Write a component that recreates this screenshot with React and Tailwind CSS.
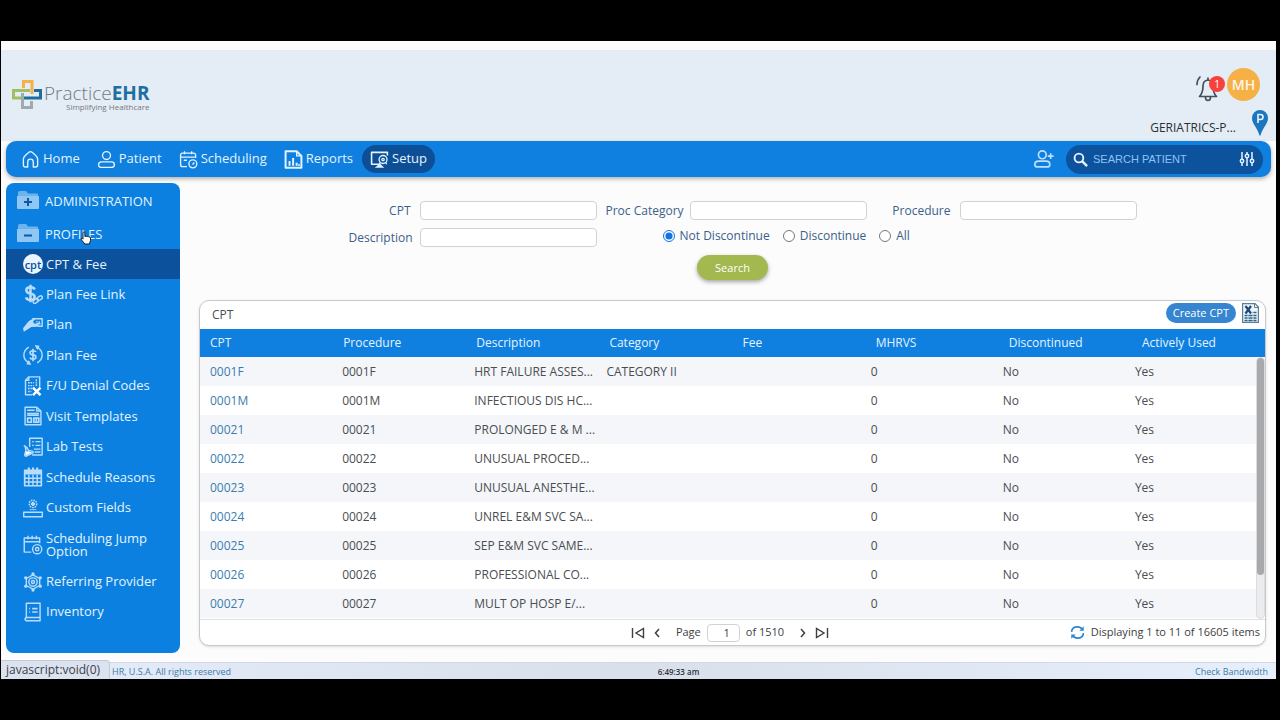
import React from 'react';

const navItems = [
  { label: 'Home', icon: 'home' },
  { label: 'Patient', icon: 'patient' },
  { label: 'Scheduling', icon: 'scheduling' },
  { label: 'Reports', icon: 'reports' },
  { label: 'Setup', icon: 'setup', active: true },
];

const sideItems = [
  { label: 'CPT & Fee', icon: 'cpt', active: true },
  { label: 'Plan Fee Link', icon: 'feeLink' },
  { label: 'Plan', icon: 'plan' },
  { label: 'Plan Fee', icon: 'planFee' },
  { label: 'F/U Denial Codes', icon: 'denial' },
  { label: 'Visit Templates', icon: 'templates' },
  { label: 'Lab Tests', icon: 'lab' },
  { label: 'Schedule Reasons', icon: 'calendar' },
  { label: 'Custom Fields', icon: 'fields' },
  { label: 'Scheduling Jump Option', icon: 'jump', tall: true },
  { label: 'Referring Provider', icon: 'provider' },
  { label: 'Inventory', icon: 'inventory' },
];

const columns = ['CPT', 'Procedure', 'Description', 'Category', 'Fee', 'MHRVS', 'Discontinued', 'Actively Used'];

const rows = [
  ['0001F', 'HRT FAILURE ASSES...', 'CATEGORY II'],
  ['0001M', 'INFECTIOUS DIS HC...', ''],
  ['00021', 'PROLONGED E & M ...', ''],
  ['00022', 'UNUSUAL PROCED...', ''],
  ['00023', 'UNUSUAL ANESTHE...', ''],
  ['00024', 'UNREL E&M SVC SA...', ''],
  ['00025', 'SEP E&M SVC SAME...', ''],
  ['00026', 'PROFESSIONAL CO...', ''],
  ['00027', 'MULT OP HOSP E/...', ''],
];

const glyphs = {
  home: <path d="M3 11.5C3 9 4 8 6 6.200L10 2.800q2-1.500 4 0L18 6.200C20 8 21 9 21 11.500V19q0 2.500-2.500 2.500H15.500V15q0-3.500-3.500-3.500T8.500 15v6.500H5.500Q3 21.500 3 19Z" />,
  patient: (
    <>
      <circle cx="12" cy="7" r="5" />
      <path d="M6 15h12q4 0 4 3.500T18 22H6q-4 0-4-3.500T6 15Z" />
    </>
  ),
  scheduling: (
    <>
      <path d="M21 10V6.500Q21 4 18.500 4H4.500Q2 4 2 6.500v12Q2 21 4.500 21H10M2 9h19M7 1.500v4M16 1.500v4M6 13h4" />
      <circle cx="17.5" cy="17.500" r="5" />
      <path d="m17 18.200 2.500-2.500" />
    </>
  ),
  reports: (
    <>
      <path d="M2 1.500h14l6 6v15H2Z" strokeWidth="2.500" />
      <path d="M16 1.500v6h6" />
      <path d="M7 20v-6M11.500 20V10M16 20v-4M19 20v-2" strokeWidth="2.500" />
    </>
  ),
  setup: (
    <>
      <path d="M12 18H2V3h20v4" strokeWidth="2" />
      <path d="M6 22.500h12L12.500 17Z" fill="currentColor" stroke="none" />
      <circle cx="16.500" cy="12" r="5" />
      <circle cx="16.500" cy="12" r="1.500" />
      <path d="m13 16-2 3M20 16l1 2" />
    </>
  ),
  feeLink: (
    <>
      <path d="M14 6.500Q13 4 9 4 4 4 4 7.500q0 3 5 4t5 4Q14 19 9 19q-4.500 0-5.500-3M9 1v21" strokeWidth="3" />
      <rect x="11.500" y="18.500" width="7" height="4" rx="2" transform="rotate(-35 15 20)" />
      <rect x="16.500" y="15" width="7" height="4" rx="2" transform="rotate(-35 20 17)" />
    </>
  ),
  plan: (
    <>
      <path d="M0 16 6 8.500q4-4 9-4l-3 3.500 1 2 6 1.500q1 2-2 2.500l-7 .5L1 20Z" fill="currentColor" stroke="none" />
      <path d="M11 4.500h12v9h-5" />
      <path d="M16 8h1.500M19.500 7.500v3M16 10.500h5" />
    </>
  ),
  planFee: (
    <>
      <path d="M7 2.500Q1 6 1 12t6 9.500M17 21.500q6-3.500 6-9.500T17 2.500" />
      <path d="M14 0l6 1-3 5ZM10 24l-6-1 3-5Z" fill="currentColor" stroke="none" />
      <path d="M15.500 8.500Q15 7 12 7 8.500 7 8.500 9.300t3.500 2.500 3.500 2.700Q15.500 17 12 17q-3 0-3.700-1.800M12 4.500v15" strokeWidth="2" />
    </>
  ),
  denial: (
    <>
      <path d="M11 22.500H3V5l4-4h13v12M7 1v4H3" />
      <path d="M6 8h7M6 11.500h7M6 15h5M6 18.500h4M16 4v8" strokeDasharray="2 1" />
      <path d="m12 14 9 9M21 14l-9 9" strokeWidth="3" stroke="#fff" />
    </>
  ),
  templates: (
    <>
      <path d="M2.500 1.500h14l5 4.500v16.500h-19ZM16.500 1.500V6h5" />
      <path d="M5 5h9M5 9h14M5 11h14" />
      <path d="M5.500 14.500h4.500v5H5.500ZM13 14.500h6v5h-6ZM16 14.500v5" strokeWidth="2" />
    </>
  ),
  lab: (
    <>
      <path d="M8 12V1.500h15v20H11" />
      <path d="M11 5.500h2M15 5.500h6M11 10h2M15 10h6M13 14.500h8M14 18h7" />
      <path d="m1 10 4 3M2.500 11l1 5L2 21.500q0 1.500 2 1.500l8-4q1-1.500-1-2l-4.500-1L4.500 12" />
      <path d="m3 17.500 4-.5 4 1.500-8 4Z" fill="#fff" stroke="none" />
    </>
  ),
  calendar: (
    <>
      <path d="M2 4h20v18.500H2Z" strokeWidth="2" />
      <path d="M1.500 3.500h21V9h-21Z" fill="currentColor" stroke="none" />
      <path d="M7 .5v4M12 .5v4M17 .5v4" strokeWidth="2.500" />
      <path d="M2 13.500h20M2 18h20M7 9v13M12 9v13M17 9v13" />
    </>
  ),
  fields: (
    <>
      <path d="M.8 17h22.400v5.500H.8Z" />
      <circle cx="12" cy="7" r="4.500" strokeDasharray="2 1" />
      <path d="M12 4.500v5M9.500 7h5" strokeWidth="2.500" />
      <path d="M8 14h8" strokeWidth="1" />
    </>
  ),
  jump: (
    <>
      <path d="M20 10V3.500H1.500v17H10M1.500 8H20M6 1v4M11 1v4M16 1v4" />
      <circle cx="17" cy="17" r="5.500" />
      <circle cx="17" cy="17" r="2" />
    </>
  ),
  provider: (
    <>
      <path d="m12 3.500 8 4.300v8.400l-8 4.300-8-4.300V7.800Z" />
      <circle cx="12" cy="12" r="5" />
      <circle cx="12" cy="12" r="1.800" />
      <g fill="currentColor" stroke="none">
        <circle cx="12" cy="2.300" r="2" />
        <circle cx="12" cy="21.700" r="2" />
        <circle cx="3.300" cy="7" r="2" />
        <circle cx="20.700" cy="7" r="2" />
        <circle cx="3.300" cy="17" r="2" />
        <circle cx="20.700" cy="17" r="2" />
      </g>
    </>
  ),
  inventory: (
    <>
      <path d="M4 19V1.500h16.500v21H5q-2.500 0-2.500-2T5 18.500h15.500" />
      <path d="M7.500 8h1M7.500 12h1M11 8h6.500M11 12h6.500" strokeWidth="2" />
    </>
  ),
};

const Icon = ({ name, className = 'size-5' }) => (
  <svg
    viewBox="0 0 24 24"
    className={`shrink-0 ${className}`}
    fill="none"
    stroke="currentColor"
    strokeWidth="1.700"
    strokeLinejoin="round"
    aria-hidden="true"
  >
    {glyphs[name]}
  </svg>
);

const Logo = () => (
  <a href="#home" className="flex items-center gap-[2px]">
    <svg viewBox="0 0 30 30" className="size-[30px]" fill="none" strokeWidth="3" aria-hidden="true">
      <path d="M10.500 13v14.500h9V21" stroke="#a3a8ad" />
      <path d="M18 10.500H1.500V18H9" stroke="#9dc063" />
      <path d="M22 10.500h6.500V18H12" stroke="#1b6f9f" />
      <path d="M11.500 8V1.500H20V14" stroke="#f5b04c" />
    </svg>
    <span className="flex flex-col items-end pt-[4px]">
      <span className="text-[19px] leading-[20px] font-light text-[#74797f]">
        Practice<b className="font-bold text-[#1d6fa3]">EHR</b>
      </span>
      <span className="text-[8px] leading-[8px] text-[#74797f]">Simplifying Healthcare</span>
    </span>
  </a>
);

const Header = () => (
  <header className="flex h-[91px] items-start justify-between bg-[#e4edf5] pr-[8px] pl-[11px]">
    <div className="pt-[29px]">
      <Logo />
    </div>
    <div className="flex flex-col items-end pt-[18px]">
      <div className="mr-[8px] flex items-center gap-[2px]">
        <button type="button" aria-label="Notifications" className="relative h-[33px] w-[30px] text-[#43505c]">
          <svg viewBox="0 0 24 28" className="absolute top-[7px] left-[1px] h-[28px] w-[24px]" fill="none" stroke="currentColor" strokeWidth="1.700" strokeLinecap="round" strokeLinejoin="round" aria-hidden="true">
            <path d="M12 5V3M12 5Q7 5.500 7 11q0 7-3.500 10.500h17Q17 18 17 11q0-5.500-5-6Z" />
            <path d="M9.500 22q0 3.500 2.500 3.500t2.500-3.500" />
            <path d="M1 9.500q0-4.500 3-7.500" />
          </svg>
          <span className="absolute top-[8px] right-0 flex size-[16px] items-center justify-center rounded-full bg-[#f8413f] text-[10px] leading-none text-white">1</span>
        </button>
        <button type="button" className="size-[33px] rounded-full bg-[#f6b146] text-[14px] font-semibold text-[#fff6e4]">MH</button>
      </div>
      <div className="mt-[9px] flex items-end gap-[16px]">
        <span className="text-[12px] leading-[16px] text-[#2b2f33]">GERIATRICS-P...</span>
        <svg viewBox="0 0 16 26" className="h-[26px] w-[16px]" aria-hidden="true">
          <path d="M8 0a8 8 0 0 1 8 8c0 6-5 9-7.500 17.500h-1C5 17 0 14 0 8a8 8 0 0 1 8-8Z" fill="#1b76bf" />
          <path d="M6 13V4.500h2.500a2.300 2.300 0 0 1 0 5H6" fill="none" stroke="#e8f4ff" strokeWidth="1.600" />
        </svg>
      </div>
    </div>
  </header>
);

const TopNav = () => (
  <nav className="mx-[5px] flex h-[36px] shrink-0 items-center justify-between rounded-[10px] bg-[#0f80df] pr-[8px] pl-[7px] shadow-[0_2px_4px_rgba(0,0,0,0.3)]">
    <div className="flex items-center gap-px">
      {navItems.map((item) => (
        <a
          key={item.label}
          href="#nav"
          className={`flex h-[28px] items-center gap-[3px] rounded-full px-[8px] text-[13px] font-medium text-[#e4f3ff] ${item.active ? 'bg-[#0c4f96]' : ''}`}
        >
          <Icon name={item.icon} className="size-[19px]" />
          {item.label}
        </a>
      ))}
    </div>
    <div className="flex items-center gap-[12px]">
      <button type="button" aria-label="Add patient" className="text-[#bfe0ff]">
        <svg viewBox="0 0 24 24" className="size-[20px]" fill="none" stroke="currentColor" strokeWidth="2" aria-hidden="true">
          <circle cx="10" cy="7" r="4.700" />
          <path d="M5.500 14.500h9q4.500 0 4.500 4 0 3-3 3H4q-3 0-3-3 0-4 4.500-4ZM20 5v7M16.500 8.500h7" />
        </svg>
      </button>
      <div className="flex h-[29px] w-[197px] items-center rounded-full bg-[#0c529c] px-[7px] text-[#e4f3ff]">
        <svg viewBox="0 0 24 24" className="size-[15px] shrink-0" fill="none" stroke="currentColor" strokeWidth="3" aria-hidden="true">
          <circle cx="9.500" cy="9.500" r="7" />
          <path d="m14.500 14.500 8 8" strokeWidth="4" />
        </svg>
        <input
          type="text"
          aria-label="Search patient"
          placeholder="SEARCH PATIENT"
          className="ml-[5px] min-w-0 flex-1 bg-transparent font-['Liberation_Sans',sans-serif] text-[11px] outline-none placeholder:text-[#8ec3f3]"
        />
        <svg viewBox="0 0 16 16" className="mr-[1px] size-[16px] shrink-0" fill="none" stroke="currentColor" strokeWidth="1.500" aria-hidden="true">
          <path d="M3 1v7M3 12v3M8 1v2M8 7v8M13 1v7M13 12v3" />
          <circle cx="3" cy="10" r="1.700" />
          <circle cx="8" cy="5" r="1.700" />
          <circle cx="13" cy="10" r="1.700" />
        </svg>
      </div>
    </div>
  </nav>
);

const Folder = ({ open }) => (
  <svg viewBox="0 0 22 18" className="mb-[4px] h-[18px] w-[22px]" aria-hidden="true">
    <path d="M1 2q0-2 2-2h6l2 2.500h9q1 0 1 1V6H1Z" fill="#6db4ee" />
    <path d="M0 5h22v12q0 1-1 1H1q-1 0-1-1Z" fill="#8ec6f4" />
    <path d={open ? 'M7 11.500h8' : 'M7 11h8M11 7v8'} stroke="#0d5aa0" strokeWidth="2" />
  </svg>
);

const Sidebar = () => (
  <aside className="flex w-[174px] shrink-0 flex-col rounded-[8px] bg-[#0b80e0] text-[13px] font-medium text-[#e4f3ff]">
    <button type="button" className="flex h-[33px] items-center gap-[6px] pt-[4px] pl-[11px]">
      <Folder />
      ADMINISTRATION
    </button>
    <button type="button" className="relative flex h-[33px] items-center gap-[6px] pt-[4px] pl-[11px]">
      <Folder open />
      PROFILES
      <svg viewBox="0 0 16 18" className="absolute top-[15px] left-[74px] h-[14px] w-[12px]" fill="#fff" stroke="#1c1c1c" strokeWidth="1.300" strokeLinejoin="round" aria-hidden="true">
        <path d="M4 10.500V2.500Q4 1 5.200 1T6.500 2.500V7q2-1 2.500 0 2-1 2.500.5 2.500-.5 2.500 1.500v3.500L12.500 17H6.500L2 11.500Q1 10 2 9.500T4 10.500Z" />
      </svg>
    </button>
    <ul className="mb-[26px] flex flex-1 flex-col justify-between">
      {sideItems.map((item) => (
        <li key={item.label}>
          <a
            href="#side"
            className={`flex items-center gap-[3px] pr-4 pl-[17px] leading-[13px] ${item.tall ? 'h-[43px]' : 'h-[30px]'} ${item.active ? 'bg-[#0c519b]' : ''}`}
          >
            {item.icon === 'cpt' ? (
              <span className="flex size-[20px] shrink-0 items-center justify-center rounded-full bg-[#e9f5ff] text-[11px] font-semibold text-[#0c519b]" aria-hidden="true">
                cpt
              </span>
            ) : (
              <Icon name={item.icon} className="size-[20px] text-[#b9dcfb]" />
            )}
            <span>{item.label}</span>
          </a>
        </li>
      ))}
    </ul>
  </aside>
);

const Field = ({ id, label }) => (
  <>
    <label htmlFor={id} className="text-right whitespace-nowrap">{label}</label>
    <input id={id} type="text" className="h-[19px] w-full rounded-[4px] border border-[#cfd2d6] bg-white px-1 outline-none" />
  </>
);

const Choice = ({ label, checked }) => (
  <label className="flex items-center gap-[5px]">
    <input type="radio" name="status" defaultChecked={checked} className="size-[12px] accent-[#1273e6]" />
    {label}
  </label>
);

const SearchForm = () => (
  <form className="flex flex-col items-center text-[12px] leading-[16px] text-[#3a6187]" onSubmit={(e) => e.preventDefault()}>
    <div className="ml-[20px] grid grid-cols-[62px_177px_75px_177px_75px_177px] items-center gap-x-[9px] gap-y-[8px]">
      <Field id="cpt" label="CPT" />
      <Field id="category" label="Proc Category" />
      <Field id="procedure" label="Procedure" />
      <Field id="description" label="Description" />
      <div className="col-span-4 flex items-center gap-[13px] pb-[3px] pl-[57px]">
        <Choice label="Not Discontinue" checked />
        <Choice label="Discontinue" />
        <Choice label="All" />
      </div>
    </div>
    <button type="submit" className="mt-[8px] h-[25px] w-[71px] rounded-full bg-[#a3b84e] text-[11px] text-white shadow-[0_2px_4px_rgba(0,0,0,0.35)]">
      Search
    </button>
  </form>
);

const ResultsPanel = () => (
  <section className="flex flex-1 flex-col rounded-[10px] border border-[#c6c9cd] bg-white text-[12px] text-[#4a4d51] shadow-sm">
    <div className="flex h-[28px] items-center justify-between pr-[6px] pl-[12px]">
      <h2>CPT</h2>
      <div className="flex items-center gap-[6px] pb-[4px]">
        <button type="button" className="h-[20px] rounded-full bg-[#3585d0] px-[7px] text-[11px] font-medium text-white">Create CPT</button>
        <button type="button" aria-label="Export to Excel">
          <svg viewBox="0 0 17 20" className="h-[20px] w-[17px]" aria-hidden="true">
            <path d="M.6.6h12.400l3.400 3.400v15.400H.6Z" fill="#eef4f8" stroke="#5d7f95" strokeWidth="1.200" />
            <path d="M12.500.6V4.500h4" fill="none" stroke="#5d7f95" />
            <path d="m3.500 3 5.500 7.500M9 3l-5.500 7.500" stroke="#174a78" strokeWidth="2.200" />
            <path d="M10.500 9.500h4M2.500 12.500h12M2.500 15h12M2.500 17.500h12" stroke="#2b638f" strokeWidth="1.700" />
            <path d="M6 11.500v7M11 8v11" stroke="#eef4f8" strokeWidth=".8" />
          </svg>
        </button>
      </div>
    </div>
    <div className="relative flex-1 border-b border-[#dcdfe3]">
      <table className="block w-full">
        <thead className="table w-full table-fixed bg-[#0f80df] text-left text-[#e4f3ff]">
          <tr className="h-[28px]">
            {columns.map((col) => (
              <th key={col} scope="col" className="pl-[10px] font-medium">{col}</th>
            ))}
          </tr>
        </thead>
        <tbody className="block pr-[8px]">
          {rows.map(([code, description, category]) => (
            <tr key={code} className="table h-[29px] w-full table-fixed whitespace-nowrap odd:bg-[#f4f6f9]">
              <td className="pl-[10px]"><a href="#cpt" className="text-[#3a7cae]">{code}</a></td>
              <td className="pl-[10px]">{code}</td>
              <td className="pl-[10px]">{description}</td>
              <td className="pl-[10px]">{category}</td>
              <td />
              <td className="pl-[10px]">0</td>
              <td className="pl-[10px]">No</td>
              <td className="pl-[10px]">Yes</td>
            </tr>
          ))}
        </tbody>
      </table>
      <div className="absolute top-[28px] right-0 bottom-0 w-[9px] rounded-full border border-[#dcdcde] bg-[#ececee]">
        <div className="h-[217px] rounded-full bg-[#a9a9ab]" />
      </div>
    </div>
    <div className="grid h-[25px] grid-cols-[1fr_auto_1fr] items-center pr-[5px] text-[11px] text-[#3d4043]">
      <span />
      <div className="flex items-center">
        <button type="button" aria-label="First page">
          <svg viewBox="0 0 14 12" className="h-[12px] w-[14px]" fill="none" stroke="currentColor" strokeWidth="1.400" aria-hidden="true">
            <path d="M1.500 1v10M12.500 1.500v9L5 6Z" />
          </svg>
        </button>
        <button type="button" aria-label="Previous page" className="ml-[9px]">
          <svg viewBox="0 0 6 10" className="h-[10px] w-[6px]" fill="none" stroke="currentColor" strokeWidth="1.500" aria-hidden="true">
            <path d="M5 1 1.500 5 5 9" />
          </svg>
        </button>
        <label htmlFor="page" className="ml-[16px]">Page</label>
        <input id="page" type="text" defaultValue="1" className="mx-[6px] h-[18px] w-[33px] rounded-[4px] border border-[#cfd2d6] bg-white pr-[9px] text-right outline-none" />
        <span>of 1510</span>
        <button type="button" aria-label="Next page" className="ml-[16px]">
          <svg viewBox="0 0 6 10" className="h-[10px] w-[6px]" fill="none" stroke="currentColor" strokeWidth="1.500" aria-hidden="true">
            <path d="m1 1 3.500 4L1 9" />
          </svg>
        </button>
        <button type="button" aria-label="Last page" className="ml-[9px]">
          <svg viewBox="0 0 14 12" className="h-[12px] w-[14px]" fill="none" stroke="currentColor" strokeWidth="1.400" aria-hidden="true">
            <path d="M12.500 1v10M1.500 1.500v9L9 6Z" />
          </svg>
        </button>
      </div>
      <div className="flex items-center justify-end gap-[6px]">
        <button type="button" aria-label="Refresh" className="text-[#2f86cc]">
          <svg viewBox="0 0 24 24" className="size-[15px]" fill="none" stroke="currentColor" strokeWidth="2.600" aria-hidden="true">
            <path d="M2.500 11Q3 3 12 3q5 0 8 4.500M21.500 13Q21 21 12 21q-5 0-8-4.500" />
            <path d="M22 2v7h-7ZM2 22v-7h7Z" fill="currentColor" stroke="none" />
          </svg>
        </button>
        <span>Displaying 1 to 11 of 16605 items</span>
      </div>
    </div>
  </section>
);

const Footer = () => (
  <footer className="relative grid h-[17px] shrink-0 grid-cols-[1fr_auto_1fr] items-end border-t border-[#d3d9e3] bg-linear-to-r from-[#e6edfa] via-[#d9e0ec] to-[#e8effc] pr-[8px] text-[9px] leading-[14px] text-[#3b7ca8]">
    <span className="pl-[111px]">HR, U.S.A. All rights reserved</span>
    <span className="pl-[88px] text-[8px] font-semibold text-[#2d3338]">6:49:33 am</span>
    <a href="#bandwidth" className="text-right">Check Bandwidth</a>
    <div className="absolute bottom-0 left-0 flex h-[19px] w-[109px] items-center rounded-tr-[4px] border-t border-r border-[#c3cad6] bg-[#dbe2f0] pl-[5px] text-[12px] text-[#3c4148]">
      javascript:void(0)
    </div>
  </footer>
);

const App = () => (
  <div className="flex min-h-screen flex-col bg-black py-[41px] pr-[4px] pl-px font-['Open_Sans','Noto_Sans',sans-serif]">
    <div className="flex flex-1 flex-col bg-[#fcfcfd] pt-[9px]">
      <Header />
      <TopNav />
      <div className="flex flex-1 gap-[19px] pt-[6px] pr-[10px] pb-[9px] pl-[5px]">
        <Sidebar />
        <main className="flex min-w-0 flex-1 flex-col gap-[20px] pt-[18px] pb-[7px]">
          <SearchForm />
          <ResultsPanel />
        </main>
      </div>
      <Footer />
    </div>
  </div>
);

export default App;
